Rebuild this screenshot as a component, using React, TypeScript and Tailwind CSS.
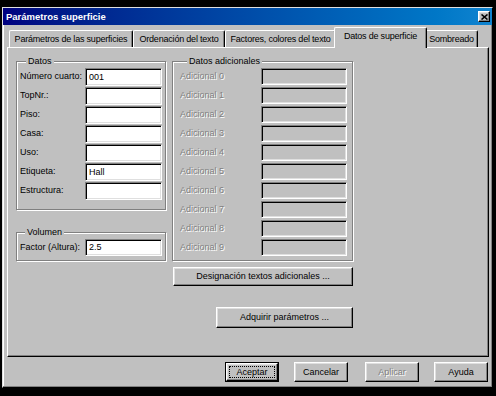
const raised =
  'border border-t-white border-l-white border-r-black border-b-black shadow-[inset_-1px_-1px_0_#808080,inset_1px_1px_0_#dfdfdf] bg-[#c0c0c0]'
const sunken =
  'border border-t-[#808080] border-l-[#808080] border-r-white border-b-white shadow-[inset_1px_1px_0_#000,inset_-1px_-1px_0_#dfdfdf]'
const etched = 'border border-[#808080] shadow-[1px_1px_0_#fff,inset_1px_1px_0_#fff]'
const disabledText = 'text-[#808080] [text-shadow:1px_1px_0_#fff]'

const datos: [string, string][] = [
  ['Número cuarto:', '001'],
  ['TopNr.:', ''],
  ['Piso:', ''],
  ['Casa:', ''],
  ['Uso:', ''],
  ['Etiqueta:', 'Hall'],
  ['Estructura:', ''],
]

const tabs = [
  { label: 'Parámetros de las superficies', w: 'w-[124px]' },
  { label: 'Ordenación del texto', w: 'w-[92px]' },
  { label: 'Factores, colores del texto', w: 'w-[111px]' },
  { label: 'Datos de superficie', w: 'w-[93px]', active: true },
  { label: 'Sombreado', w: 'w-[53px]' },
]

function Field({ value, disabled, h = 'h-[18px]', w }: { value?: string; disabled?: boolean; h?: string; w: string }) {
  return (
    <div className={`${sunken} ${h} ${w} ${disabled ? 'bg-[#c0c0c0]' : 'bg-white'} flex items-center pl-[3px] leading-none`}>
      {value}
    </div>
  )
}

function Btn({ label, w, h, disabled }: { label: string; w: string; h: string; disabled?: boolean }) {
  return (
    <div className={`${raised} ${w} ${h} flex items-center justify-center leading-none ${disabled ? disabledText : ''}`}>
      {label}
    </div>
  )
}

export default function App() {
  return (
    <div className="w-[496px] h-[396px] bg-black overflow-hidden pt-[7px] pl-[2px] font-['Liberation_Sans',Arial,sans-serif] text-[9px] text-black">
      <div className="w-[491px] h-[381px] bg-[#c0c0c0] border border-t-[#dfdfdf] border-l-[#dfdfdf] border-r-black border-b-black shadow-[inset_-1px_-1px_0_#808080,inset_1px_1px_0_#fff] flex flex-col">
        {/* title bar */}
        <div className="h-[17px] bg-gradient-to-r from-[#000080] to-[#1084d0] flex items-center justify-between pl-[3px] pr-[2px]">
          <span className="text-white font-bold text-[9.5px] leading-none">Parámetros superficie</span>
          <div className={`${raised} w-[12px] h-[11px] flex items-center justify-center`}>
            <svg width="7" height="6" viewBox="0 0 7 6">
              <path d="M0.5 0.5 L6.5 5.5 M6.5 0.5 L0.5 5.5" stroke="#000" strokeWidth="1.6" />
            </svg>
          </div>
        </div>

        {/* tabs */}
        <div className="mt-[2px] h-[20px] ml-[6px] flex items-end tracking-[-0.2px]">
          {tabs.map((t) =>
            t.active ? (
              <div
                key={t.label}
                className={`${t.w} -mx-[2px] h-[21px] -mb-[1px] relative z-10 bg-[#c0c0c0] border-t border-l border-r border-t-white border-l-white border-r-black shadow-[inset_-1px_0_0_#808080] rounded-t-[2px] flex items-center justify-center pb-[3px] leading-none`}
              >
                {t.label}
              </div>
            ) : (
              <div
                key={t.label}
                className={`${t.w} h-[17px] border-t border-l border-r border-t-white border-l-white border-r-black shadow-[inset_-1px_0_0_#808080] rounded-t-[2px] flex items-center justify-center leading-none`}
              >
                {t.label}
              </div>
            )
          )}
        </div>

        {/* panel */}
        <div className="ml-[4px] w-[482px] h-[310px] border border-t-white border-l-white border-r-black border-b-black shadow-[inset_-1px_-1px_0_#808080] pt-[8px] pl-[8px] flex gap-[6px]">
          <div className="w-[150px] flex flex-col">
            <fieldset className={`${etched} pt-[1px] pb-[9px] pl-[3px] pr-[3px]`}>
              <legend className="ml-[6px] px-[2px] leading-[11px] bg-[#c0c0c0]">Datos</legend>
              <div className="flex flex-col gap-[1px]">
                {datos.map(([l, v]) => (
                  <div key={l} className="flex items-center justify-between">
                    <span>{l}</span>
                    <Field value={v} w="w-[77px]" />
                  </div>
                ))}
              </div>
            </fieldset>
            <fieldset className={`${etched} mt-[17px] pt-[1px] pb-[4px] pl-[3px] pr-[3px]`}>
              <legend className="ml-[5px] px-[2px] leading-[11px] bg-[#c0c0c0]">Volumen</legend>
              <div className="flex items-center justify-between">
                <span>Factor (Altura):</span>
                <Field value="2.5" w="w-[77px]" h="h-[17px]" />
              </div>
            </fieldset>
          </div>

          <div className="w-[181px] flex flex-col">
            <fieldset className={`${etched} pt-[1px] pb-[4px] pl-[7px] pr-[5px]`}>
              <legend className="ml-[7px] px-[2px] leading-[11px] bg-[#c0c0c0]">Datos adicionales</legend>
              <div className="flex flex-col gap-[2px]">
                {Array.from({ length: 10 }, (_, i) => (
                  <div key={i} className="flex items-center justify-between">
                    <span className={disabledText}>Adicional {i}</span>
                    <Field disabled w="w-[86px]" h="h-[17px]" />
                  </div>
                ))}
              </div>
            </fieldset>
            <div className="mt-[6px] self-end">
              <Btn label="Designación textos adicionales ..." w="w-[180px]" h="h-[19px]" />
            </div>
            <div className="mt-[21px] self-end">
              <Btn label="Adquirir parámetros ..." w="w-[137px]" h="h-[21px]" />
            </div>
          </div>
        </div>

        {/* bottom buttons */}
        <div className="mt-[5px] flex justify-end pr-[4px]">
          <div className="w-[54px] h-[20px] border border-black">
            <div className={`${raised} w-full h-full flex items-center justify-center p-[2px]`}>
              <div className="w-full h-full border border-dotted border-black flex items-center justify-center leading-none">
                Aceptar
              </div>
            </div>
          </div>
          <div className="ml-[15px]">
            <Btn label="Cancelar" w="w-[54px]" h="h-[20px]" />
          </div>
          <div className="ml-[17px]">
            <Btn label="Aplicar" w="w-[54px]" h="h-[20px]" disabled />
          </div>
          <div className="ml-[15px]">
            <Btn label="Ayuda" w="w-[54px]" h="h-[20px]" />
          </div>
        </div>
      </div>
    </div>
  )
}
